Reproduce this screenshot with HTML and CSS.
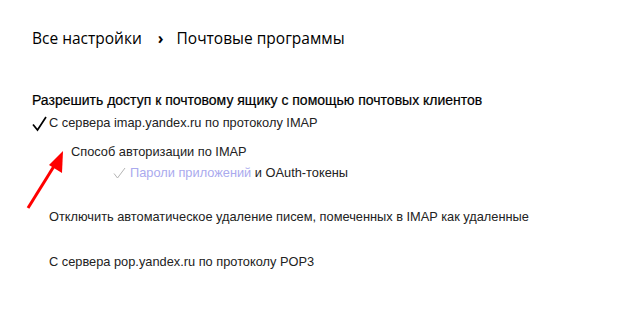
FILE: index.html
```html
<!DOCTYPE html>
<html lang="ru">
<head>
    <meta charset="UTF-8">
    <title>Почтовые программы</title>
    <link rel="stylesheet" href="styles.css">
</head>
<body>
    <div class="page">
        <div class="crumbs">
            <span>Все настройки</span>
            <span class="sep">&rsaquo;</span>
            <span>Почтовые программы</span>
        </div>

        <div class="section">
            <div class="heading">Разрешить доступ к почтовому ящику с помощью почтовых клиентов</div>

            <div class="option checked">
                <svg class="tick" width="15" height="16" viewBox="0 0 15 16">
                    <path d="M1 8.5 L5.5 14 L14 1" fill="none" stroke="#000" stroke-width="1.7"/>
                </svg>
                <span>С сервера imap.yandex.ru по протоколу IMAP</span>
            </div>

            <div class="sub">
                <div class="sub-title">Способ авторизации по IMAP</div>
                <div class="sub-option">
                    <svg class="tick-light" width="13" height="12" viewBox="0 0 13 12">
                        <path d="M1 6.5 L4.5 11 L12 1" fill="none" stroke="#b4b4b4" stroke-width="1"/>
                    </svg>
                    <span><span class="link">Пароли приложений</span> и OAuth-токены</span>
                </div>
            </div>

            <div class="option plain">Отключить автоматическое удаление писем, помеченных в IMAP как удаленные</div>

            <div class="option plain pop">С сервера pop.yandex.ru по протоколу POP3</div>
        </div>

        <svg class="arrow" width="44" height="64" viewBox="0 0 44 64">
            <line x1="3" y1="61" x2="31" y2="16" stroke="#ff0000" stroke-width="3"/>
            <polygon points="38,4 37,26 24,18" fill="#ff0000"/>
        </svg>
    </div>
</body>
</html>
```

FILE: styles.css
```css
body {
    margin: 0;
    background: #fff;
    font-family: "Liberation Sans", Arial, sans-serif;
    color: #222;
}
.page {
    position: relative;
    padding: 28px 32px;
}
.crumbs {
    display: flex;
    align-items: center;
    font-family: "Open Sans", sans-serif;
    font-size: 15.5px;
    color: #000;
    line-height: 20px;
}
.crumbs .sep {
    font-weight: bold;
    margin: 0 13px 0 16px;
}
.section {
    margin-top: 44px;
    font-size: 12.8px;
    line-height: 16px;
}
.heading {
    font-size: 14px;
    color: #000;
    -webkit-text-stroke: 0.2px #000;
}
.option {
    display: flex;
    align-items: center;
}
.checked {
    margin-top: 7px;
}
.tick {
    margin-right: 2px;
    position: relative;
    top: 1px;
}
.plain {
    padding-left: 17px;
    margin-top: 28px;
}
.pop {
    margin-top: 29px;
}
.sub {
    padding-left: 39px;
    margin-top: 13px;
}
.sub-option {
    display: flex;
    align-items: center;
    padding-left: 42px;
    margin-top: 5px;
}
.tick-light {
    margin-right: 4px;
}
.link {
    color: #aaaaee;
}
.arrow {
    position: absolute;
    left: 25px;
    top: 147px;
}
```
